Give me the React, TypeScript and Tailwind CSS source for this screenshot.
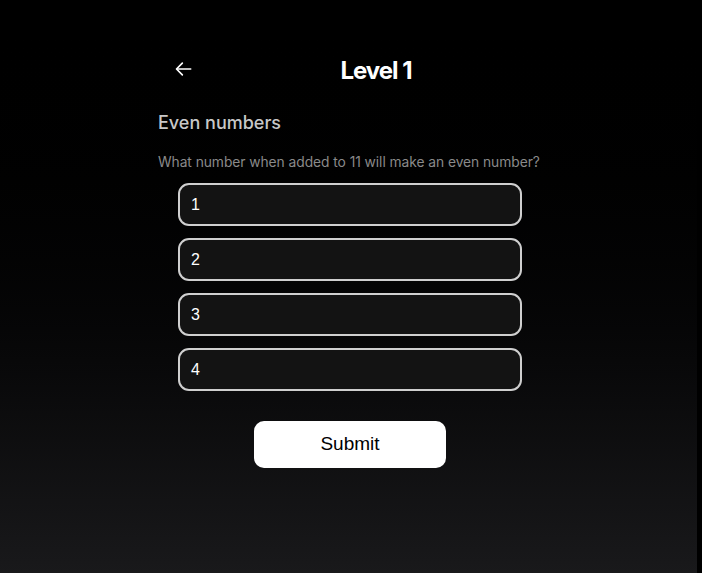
import React from "react";

export default function App() {
  const options = ["1", "2", "3", "4"];
  return (
    <div className="relative w-full h-[573px] overflow-hidden bg-gradient-to-b from-[#000000] to-[#19191b] font-['Inter',sans-serif]">
      <div className="absolute right-0 top-0 h-full w-[5px] bg-black" />
      <div className="w-[384px] ml-[158px] pt-[55px] flex flex-col">
        <div className="flex items-center h-[32px]">
          <div className="w-[52px] flex justify-center">
            <svg width="20" height="20" viewBox="0 0 24 24" fill="none" stroke="white" strokeWidth="2" strokeLinecap="round" strokeLinejoin="round" className="-mt-[5px]">
              <path d="M20 12H4" />
              <path d="M10 5l-7 7 7 7" />
            </svg>
          </div>
          <div className="flex-1 text-center text-white text-[24px] font-bold tracking-[-1px]">Level 1</div>
        </div>
        <div className="mt-[24px] text-[18px] font-medium text-[#c8c8c8] leading-[24px]">Even numbers</div>
        <div className="mt-[17px] text-[13.8px] tracking-[-0.05px] text-[#8a8a8a] leading-[20px] whitespace-nowrap">What number when added to 11 will make an even number?</div>
        <div className="mt-[11px] mx-[20px] flex flex-col gap-[12px]">
          {options.map((o) => (
            <div key={o} className="h-[43px] rounded-[11px] border-2 border-[#cfcfcf] bg-[#131313] flex items-center pl-[11px] text-white text-[16px] font-['Liberation_Sans',sans-serif]">
              {o}
            </div>
          ))}
        </div>
        <div className="mt-[30px] flex justify-center">
          <button className="w-[192px] h-[47px] rounded-[10px] bg-white text-black text-[19px] font-['Liberation_Sans',sans-serif]">Submit</button>
        </div>
      </div>
    </div>
  );
}
